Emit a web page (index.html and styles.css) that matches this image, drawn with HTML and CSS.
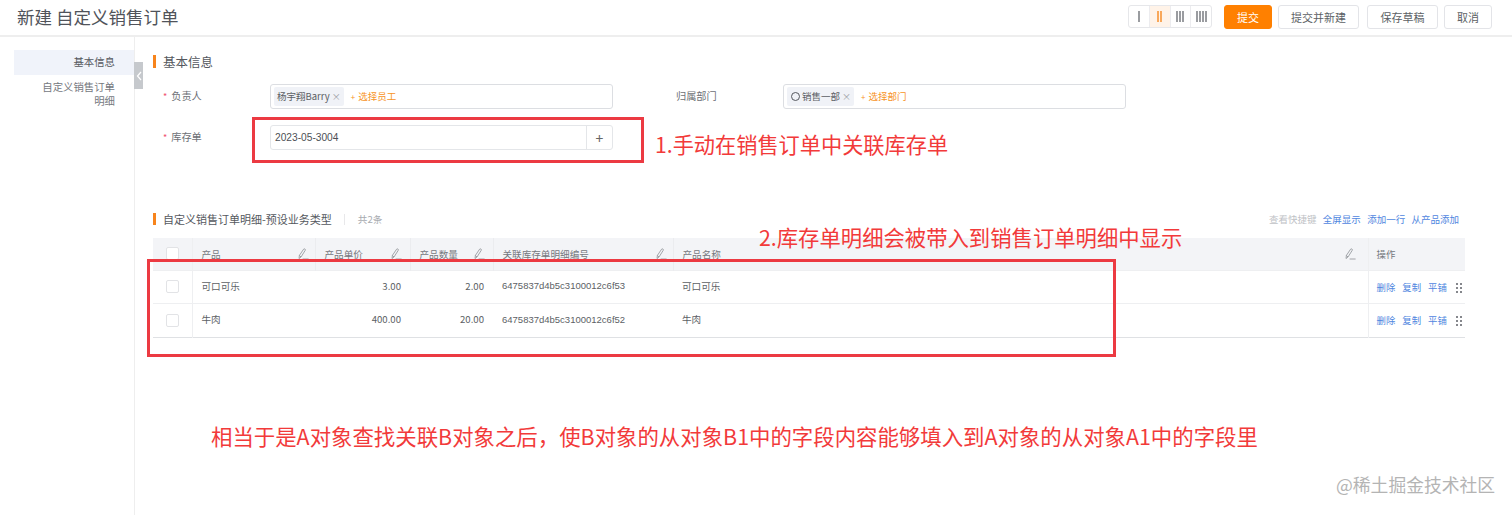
FILE: index.html
```html
<!DOCTYPE html>
<html lang="zh">
<head>
<meta charset="utf-8">
<title>新建 自定义销售订单</title>
<link rel="stylesheet" href="styles.css">
</head>
<body>
<svg class="defs" width="0" height="0" aria-hidden="true">
  <symbol id="pen" viewBox="0 0 12 12">
    <path d="M2 10.5 L2.4 7.4 L6.6 1.2 Q7.3 .6 8 1 Q8.6 1.6 8.2 2.4 L4 9 Z M4 9 L2.4 7.4 M5.6 11 H11.6" fill="none" stroke="#8d9095" stroke-width=".8"/>
  </symbol>
</svg>
<div class="page">
  <header class="topbar">
    <h1 class="title">新建 自定义销售订单</h1>
    <div class="actions">
      <div class="columns-switch">
        <span class="col-opt"><i class="tick"></i></span>
        <span class="col-opt is-on"><i class="tick"></i><i class="tick"></i></span>
        <span class="col-opt"><i class="tick"></i><i class="tick"></i><i class="tick"></i></span>
        <span class="col-opt"><i class="tick"></i><i class="tick"></i><i class="tick"></i><i class="tick"></i></span>
      </div>
      <button class="btn btn-primary">提交</button>
      <button class="btn btn-wide">提交并新建</button>
      <button class="btn btn-mid">保存草稿</button>
      <button class="btn btn-last">取消</button>
    </div>
  </header>
  <div class="body">
    <nav class="side">
      <a class="side-item is-active">基本信息</a>
      <a class="side-item">自定义销售订单<br>明细</a>
      <span class="collapse"><svg width="6" height="10" viewBox="0 0 6 10"><path d="M5 1 L1.5 5 L5 9" fill="none" stroke="#fff" stroke-width="1.2"/></svg></span>
    </nav>
    <main class="main">
      <h2 class="section-title">基本信息</h2>
      <div class="form-row">
        <div class="field-label"><span class="req">*</span>负责人</div>
        <div class="field-box">
          <span class="tag">杨宇翔Barry<span class="tag-x">×</span></span>
          <span class="pick"><span class="pick-dot">+</span>选择员工</span>
        </div>
        <div class="field-label field-label-second">归属部门</div>
        <div class="field-box">
          <span class="tag"><i class="ring"></i>销售一部<span class="tag-x">×</span></span>
          <span class="pick"><span class="pick-dot">+</span>选择部门</span>
        </div>
      </div>
      <div class="form-row form-row-2">
        <div class="field-label"><span class="req">*</span>库存单</div>
        <div class="field-box field-lookup">
          <span class="lookup-value">2023-05-3004</span>
          <span class="lookup-add">+</span>
        </div>
      </div>
      <div class="detail-head">
        <h2 class="section-title section-title-sm">自定义销售订单明细-预设业务类型</h2>
        <span class="sep"></span>
        <span class="count">共2条</span>
        <div class="links">
          <a class="link-muted">查看快捷键</a>
          <a class="link">全屏显示</a>
          <a class="link">添加一行</a>
          <a class="link">从产品添加</a>
        </div>
      </div>
      <table class="grid">
        <colgroup>
          <col class="c-check"><col class="c-prod"><col class="c-price"><col class="c-qty"><col class="c-ref"><col class="c-name"><col class="c-op">
        </colgroup>
        <thead>
          <tr>
            <th class="cell-check"><span class="box"></span></th>
            <th><span class="th-in">产品<svg class="pen"><use href="#pen"/></svg></span></th>
            <th class="th-mid"><span class="th-in">产品单价<svg class="pen"><use href="#pen"/></svg></span></th>
            <th class="th-mid"><span class="th-in">产品数量<svg class="pen"><use href="#pen"/></svg></span></th>
            <th><span class="th-in">关联库存单明细编号<svg class="pen"><use href="#pen"/></svg></span></th>
            <th class="th-wide"><span class="th-in">产品名称<svg class="pen"><use href="#pen"/></svg></span></th>
            <th class="cell-op">操作</th>
          </tr>
        </thead>
        <tbody>
          <tr>
            <td class="cell-check"><span class="box"></span></td>
            <td>可口可乐</td>
            <td class="num">3.00</td>
            <td class="num">2.00</td>
            <td class="code">6475837d4b5c3100012c6f53</td>
            <td>可口可乐</td>
            <td class="cell-op"><a class="link">删除</a><a class="link">复制</a><a class="link">平铺</a><span class="drag"></span></td>
          </tr>
          <tr>
            <td class="cell-check"><span class="box"></span></td>
            <td>牛肉</td>
            <td class="num">400.00</td>
            <td class="num">20.00</td>
            <td class="code">6475837d4b5c3100012c6f52</td>
            <td>牛肉</td>
            <td class="cell-op"><a class="link">删除</a><a class="link">复制</a><a class="link">平铺</a><span class="drag"></span></td>
          </tr>
        </tbody>
      </table>
    </main>
  </div>
  <div class="mark mark-a"></div>
  <div class="mark mark-b"></div>
  <p class="note note-1">1.手动在销售订单中关联库存单</p>
  <p class="note note-2">2.库存单明细会被带入到销售订单明细中显示</p>
  <p class="note note-3">相当于是A对象查找关联B对象之后，使B对象的从对象B1中的字段内容能够填入到A对象的从对象A1中的字段里</p>
  <p class="watermark">@稀土掘金技术社区</p>
</div>
</body>
</html>
```
FILE: styles.css
```css
* { box-sizing: border-box; }
html, body { margin: 0; padding: 0; background: #fff; }
body {
  font-family: "Noto Sans CJK SC", "Noto Sans", sans-serif;
  color: #55585e;
  font-size: 10px;
  overflow: hidden;
}
.defs { position: absolute; }
.page { position: relative; width: 1512px; height: 515px; overflow: hidden; }

/* top bar */
.topbar {
  height: 37px;
  border-bottom: 2px solid #eeeeee;
  display: flex;
  align-items: center;
  justify-content: space-between;
  padding: 0 20px 2px 17px;
}
.title { margin: 0; font-size: 17.5px; font-weight: 400; color: #50535a; line-height: 24px; }
.actions { display: flex; align-items: center; }
.columns-switch {
  display: flex;
  width: 84px;
  height: 23px;
  border: 1px solid #e6e7ea;
  border-radius: 3px;
  margin-right: 12px;
}
.col-opt {
  flex: 1;
  display: flex;
  align-items: center;
  justify-content: center;
  gap: 1px;
  border-left: 1px solid #ececef;
}
.col-opt:first-child { border-left: 0; }
.col-opt.is-on { background: #fff3e8; }
.tick { width: 2px; height: 11px; background: #9a9ca0; }
.is-on .tick { background: #f9a85a; }
.btn {
  height: 24px;
  padding: 0;
  font: inherit;
  font-size: 11px;
  color: #5c5f65;
  background: #fff;
  border: 1px solid #e3e4e8;
  border-radius: 3px;
}
.btn-primary { width: 48px; margin-right: 6px; background: #ff8000; border-color: #ff8000; color: #fff; }
.btn-wide { width: 81px; margin-right: 8px; }
.btn-mid { width: 71px; margin-right: 6px; }
.btn-last { width: 48px; }

/* body */
.body { display: flex; height: 478px; }
.side {
  position: relative;
  width: 135px;
  flex: none;
  padding: 13px 0 0 14px;
  border-right: 1px solid #eeeeee;
}
.side-item {
  display: block;
  padding: 0 19px 0 0;
  text-align: right;
  font-size: 10.4px;
  line-height: 14px;
  color: #75787e;
}
.side-item.is-active {
  height: 25px;
  line-height: 23px;
  background: #f0f3fa;
  color: #55585e;
  margin-bottom: 5px;
}
.collapse {
  position: absolute;
  left: 134px;
  top: 25px;
  width: 9px;
  height: 27px;
  background: #c6c9cd;
  display: flex;
  align-items: center;
  justify-content: center;
}
.main { flex: 1; padding: 18px 47px 0 18px; min-width: 0; }
.section-title {
  margin: 0;
  height: 13px;
  line-height: 13px;
  padding-left: 7px;
  border-left: 3px solid #f7841c;
  font-size: 12.5px;
  font-weight: 400;
  color: #55585e;
}
.section-title-sm { font-size: 11px; height: 12px; line-height: 12px; }

/* form */
.form-row { display: flex; align-items: center; height: 25px; margin-top: 16px; }
.form-row-2 { margin-top: 16px; }
.field-label { width: 117px; flex: none; padding: 0 0 2px 10px; font-size: 10.2px; color: #6d7076; }
.field-label-second { width: 107px; margin-left: 63px; padding-left: 0; }
.req { color: #f0506e; margin-right: 4px; font-size: 9px; }
.field-box {
  width: 343px;
  height: 25px;
  flex: none;
  display: flex;
  align-items: center;
  padding: 0 3px;
  border: 1px solid #dcdee2;
  border-radius: 3px;
  background: #fff;
}
.tag {
  display: inline-flex;
  align-items: center;
  height: 19px;
  padding: 0 3px 1px;
  background: #f0f2f7;
  border-radius: 2px;
  font-size: 9.5px;
  color: #5c5f65;
}
.tag-x { margin-left: 2px; color: #9a9da3; font-size: 9px; }
.ring { width: 9px; height: 9px; border: 1px solid #55585e; border-radius: 50%; margin: 0 2px 0 1px; }
.pick { margin-left: 7px; padding-bottom: 1px; color: #f7931e; font-size: 9.5px; }
.pick-dot { margin-right: 3px; font-size: 8px; }
.field-lookup { padding: 0; border-color: #e4e6e9; }
.lookup-value { flex: 1; padding-left: 4px; font-size: 10.2px; color: #4c4f55; font-family: "Liberation Sans", sans-serif; }
.lookup-add {
  width: 26px;
  height: 100%;
  border-left: 1px solid #e4e6e9;
  display: flex;
  align-items: center;
  justify-content: center;
  font-size: 14px;
  color: #666;
}

/* details */
.detail-head { display: flex; align-items: center; height: 12px; margin-top: 63px; }
.sep { width: 1px; height: 11px; background: #e8e8ea; margin: 0 13px 0 12px; }
.count { font-size: 9.6px; color: #a8abb0; }
.links { margin-left: auto; margin-right: 6px; display: flex; gap: 6.3px; font-size: 9.5px; }
.link { color: #4f86e0; }
.link-muted { color: #c0c2c6; }

.grid {
  width: 1312px;
  margin-top: 13px;
  table-layout: fixed;
  border-collapse: collapse;
  border-bottom: 1px solid #dfe1e4;
  font-size: 9.6px;
}
.c-check { width: 39px; }
.c-prod { width: 123px; }
.c-price { width: 95px; }
.c-qty { width: 83px; }
.c-ref { width: 180px; }
.c-name { width: 695px; }
.c-op { width: 97px; }
.grid th {
  height: 32px;
  background: #f3f4f7;
  font-weight: 400;
  text-align: left;
  padding: 0 6px 0 9px;
  color: #75787e;
  border-left: 1px solid #ebecef;
}
.grid th.th-mid { padding-right: 8px; }
.grid th.th-wide { padding-right: 12px; }
.grid th:first-child, .grid td:first-child { border-left: 0; }
.th-in { display: flex; align-items: center; justify-content: space-between; }
.pen { width: 12px; height: 12px; flex: none; }
.grid td {
  height: 33.5px;
  padding: 0 9px 2px;
  border-top: 1px solid #eeeff1;
  color: #5c5f65;
}
.grid .code { font-family: "Liberation Sans", sans-serif; font-size: 9.5px; }
.grid .cell-check { padding: 0 0 0 13px; border-right: 1px solid #eeeff1; }
.grid th.cell-check { padding: 0 0 0 13px; }
.box { display: block; width: 13px; height: 13px; border: 1px solid #e2e3e6; border-radius: 2px; background: #fff; }
.grid .num { text-align: right; }
.grid .cell-op { padding: 0 0 0 8px; border-left: 1px solid #eeeff1; white-space: nowrap; font-size: 9.4px; }
.cell-op .link { margin-right: 7px; }
.drag {
  display: inline-block;
  vertical-align: middle;
  width: 8px;
  height: 12px;
  margin-left: 1px;
  background-image: radial-gradient(circle, #85878c 1px, transparent 1.1px);
  background-size: 4px 4px;
}

/* annotations laid over the screenshot */
.mark { position: absolute; border: 3px solid #ec3a42; }
.mark-a { left: 252px; top: 117px; width: 392px; height: 46px; }
.mark-b { left: 147px; top: 259px; width: 969px; height: 98px; }
.note {
  position: absolute;
  margin: 0;
  white-space: nowrap;
  color: #f23a3a;
  font-size: 21.35px;
  line-height: 28px;
}
.note-1 { left: 655px; top: 130px; font-size: 21.2px; }
.note-2 { left: 759px; top: 223px; }
.note-3 { left: 211px; top: 422px; font-size: 21.42px; }
.watermark {
  position: absolute;
  margin: 0;
  left: 1336px;
  top: 472px;
  color: #b4b4b4;
  font-size: 17.8px;
  line-height: 24px;
  white-space: nowrap;
}
```
